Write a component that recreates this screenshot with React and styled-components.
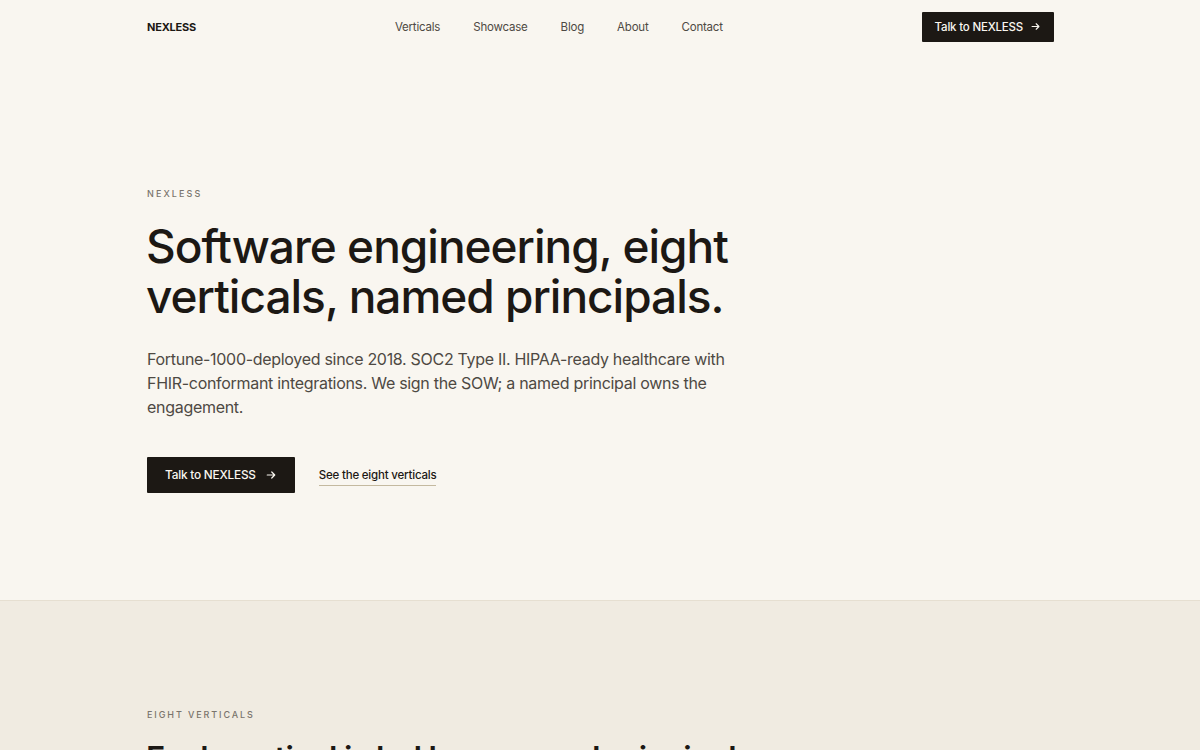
import React from "react";
import styled, { createGlobalStyle } from "styled-components";

const GlobalStyle = createGlobalStyle`
  * { box-sizing: border-box; }
  body {
    margin: 0;
    background: #f9f6f0;
    color: #1c1814;
    font-family: "Inter", "Noto Sans", sans-serif;
  }
`;

const Arrow = ({ size = 12 }) => (
  <svg width={size} height={size} viewBox="0 0 16 16" fill="none">
    <path
      d="M3 8h10M9 4l4 4-4 4"
      stroke="currentColor"
      strokeWidth="1.6"
      strokeLinecap="round"
      strokeLinejoin="round"
    />
  </svg>
);

const App = () => {
  return (
    <>
      <GlobalStyle />
      <Header>
        <Bar>
          <Logo>NEXLESS</Logo>
          <Nav>
            <a href="#verticals">Verticals</a>
            <a href="#showcase">Showcase</a>
            <a href="#blog">Blog</a>
            <a href="#about">About</a>
            <a href="#contact">Contact</a>
          </Nav>
          <DarkButton $small>
            Talk to NEXLESS <Arrow size={11} />
          </DarkButton>
        </Bar>
      </Header>

      <Hero>
        <Container>
          <Eyebrow>NEXLESS</Eyebrow>
          <Title>
            Software engineering, eight
            <br />
            verticals, named principals.
          </Title>
          <Lead>
            Fortune-1000-deployed since 2018. SOC2 Type II. HIPAA-ready
            healthcare with FHIR-conformant integrations. We sign the SOW; a
            named principal owns the engagement.
          </Lead>
          <Actions>
            <DarkButton>
              Talk to NEXLESS <Arrow />
            </DarkButton>
            <TextLink href="#verticals">See the eight verticals</TextLink>
          </Actions>
        </Container>
      </Hero>

      <Verticals id="verticals">
        <Container>
          <Eyebrow $tight>EIGHT VERTICALS</Eyebrow>
          <SectionTitle>
            Each vertical is led by a named principal with domain depth.
          </SectionTitle>
        </Container>
      </Verticals>
    </>
  );
};

const Container = styled.div`
  width: 908px;
  margin: 0 auto;
`;

const Bar = styled(Container)`
  display: flex;
  align-items: center;
  justify-content: space-between;
  height: 53px;
`;

const Header = styled.header`
  background: #f9f6f0;
`;

const Logo = styled.div`
  font-size: 11px;
  font-weight: 700;
  letter-spacing: -0.2px;
  margin-left: 1px;
`;

const Nav = styled.nav`
  display: flex;
  gap: 33px;
  a {
    color: #4e4943;
    font-size: 11.5px;
    letter-spacing: -0.2px;
    text-decoration: none;
  }
`;

const DarkButton = styled.button`
  display: inline-flex;
  align-items: center;
  gap: ${(p) => (p.$small ? "7px" : "9px")};
  height: ${(p) => (p.$small ? "30px" : "36px")};
  padding: 0 ${(p) => (p.$small ? "13px" : "18px")};
  border: none;
  border-radius: 1px;
  background: #1c1814;
  color: #f9f6f0;
  font-family: inherit;
  font-size: ${(p) => (p.$small ? "11.5px" : "11.8px")};
  letter-spacing: -0.2px;
  font-weight: 500;
  cursor: pointer;
`;

const Hero = styled.section`
  padding: 135px 0 107px;
  border-bottom: 1px solid #e6dfd1;
`;

const Eyebrow = styled.div`
  font-size: 9px;
  letter-spacing: ${(p) => (p.$tight ? "1.9px" : "2.1px")};
  color: #7a746c;
  font-weight: 500;
  margin: 0 0 ${(p) => (p.$tight ? "19px" : "22px")} 1px;
`;

const Title = styled.h1`
  margin: 0 0 26px;
  font-size: 46px;
  line-height: 50px;
  font-weight: 500;
  letter-spacing: -1px;
  color: #1c1814;
`;

const Lead = styled.p`
  margin: 0 0 38px 1px;
  max-width: 600px;
  font-size: 16px;
  line-height: 24px;
  letter-spacing: -0.3px;
  color: #4e4943;
`;

const Actions = styled.div`
  display: flex;
  align-items: center;
  gap: 24px;
  margin-left: 1px;
`;

const TextLink = styled.a`
  color: #1c1814;
  font-size: 11.5px;
  font-weight: 500;
  letter-spacing: -0.2px;
  text-decoration: none;
  padding-bottom: 3px;
  border-bottom: 1px solid #c4b99f;
  margin-top: 3px;
`;

const Verticals = styled.section`
  background: #f0ebe1;
  padding: 108px 0 80px;
`;

const SectionTitle = styled.h2`
  margin: 0;
  max-width: 660px;
  font-size: 32px;
  line-height: 40px;
  font-weight: 600;
  letter-spacing: -0.7px;
`;

export default App;
